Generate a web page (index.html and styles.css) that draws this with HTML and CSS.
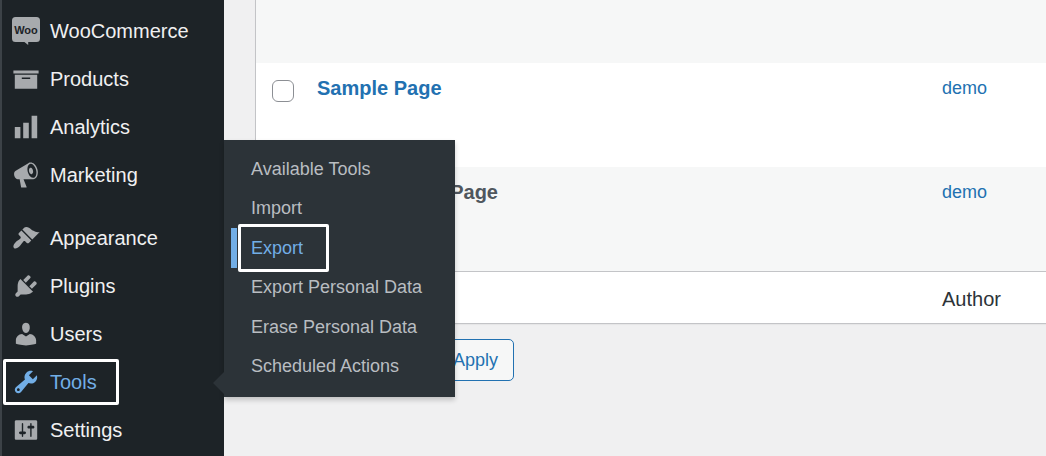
FILE: index.html
```html
<!DOCTYPE html>
<html lang="en">
<head>
    <meta charset="UTF-8">
    <meta name="viewport" content="width=device-width, initial-scale=1.0">
    <title>Pages</title>
    <link rel="stylesheet" href="styles.css">
</head>
<body>

    <div class="admin-wrap">
        <nav class="admin-menu">
            <ul class="menu-list">
                <li class="menu-item">
                    <a href="#">
                        <svg viewBox="0 0 28 28"><path d="M3.500 0h21a3.500 3.500 0 0 1 3.500 3.500v18a3.500 3.500 0 0 1-3.500 3.500h-8.300v3l-3.800-3H3.500a3.500 3.500 0 0 1-3.500-3.500v-18a3.500 3.500 0 0 1 3.500-3.500z"></path><text x="14" y="17" class="woo-text">Woo</text></svg>
                        <span>WooCommerce</span>
                    </a>
                </li>
                <li class="menu-item">
                    <a href="#">
                        <svg viewBox="0 0 20 20"><path d="M19 4v2H1V4h18zM2 7h16v10H2V7zm11 3V9H7v1h6z"></path></svg>
                        <span>Products</span>
                    </a>
                </li>
                <li class="menu-item">
                    <a href="#">
                        <svg viewBox="0 0 20 20"><path d="M18 18V2h-4v16h4zm-6 0V7H8v11h4zm-6 0v-8H2v8h4z"></path></svg>
                        <span>Analytics</span>
                    </a>
                </li>
                <li class="menu-item">
                    <a href="#">
                        <svg viewBox="0 0 20 20"><path d="M18.15 5.94c.46 1.62.38 3.22-.02 4.48-.42 1.28-1.26 2.18-2.3 2.48-.16.06-.26.06-.4.06-.06.02-.12.02-.18.02-.06.02-.14.02-.22.02h-6.8l2.22 5.5c.02.14-.06.26-.14.34-.08.1-.24.16-.34.16H6.95c-.1 0-.26-.06-.34-.16-.08-.08-.16-.2-.14-.34l-1-5.5H4.25l-.02-.02c-.5.06-1.08-.18-1.54-.62s-.88-1.08-1.06-1.88c-.24-.8-.2-1.56-.02-2.2.18-.62.58-1.08 1.06-1.3l.02-.02 9-5.4c.1-.06.18-.1.24-.16.06-.04.14-.08.24-.12.16-.08.28-.12.5-.18 1.04-.3 2.24.1 3.22.98s1.84 2.24 2.26 3.86zm-2.58 5.98h-.02c.4-.1.74-.34 1.04-.7.58-.7.86-1.76.86-3.04 0-.64-.1-1.3-.28-1.98-.34-1.36-1.02-2.5-1.78-3.24s-1.68-1.1-2.46-.88c-.82.22-1.4.96-1.7 2-.32 1.04-.28 2.36.06 3.72.38 1.36 1 2.5 1.8 3.24.78.74 1.62 1.1 2.48.88zm-2.54-7.08c.22-.04.42-.02.62.04.38.16.76.48 1.02 1s.42 1.2.42 1.78c0 .3-.04.56-.12.8-.18.48-.44.84-.86.94-.34.1-.8-.06-1.14-.4s-.64-.86-.78-1.5c-.18-.62-.12-1.24.02-1.72s.48-.84.82-.94z"></path></svg>
                        <span>Marketing</span>
                    </a>
                </li>
                <li class="menu-item separated">
                    <a href="#">
                        <svg viewBox="0 0 20 20"><path d="M14.48 11.06L7.41 3.99l1.5-1.5c.5-.56 2.3-.47 3.51.32 1.21.8 1.43 1.28 2.91 2.1 1.18.64 2.45 1.26 4.45.85zm-.71.71L6.7 4.7 4.93 6.47c-.39.39-.39 1.02 0 1.41l1.06 1.06c.39.39.39 1.03 0 1.42-.6.6-1.43 1.11-2.21 1.69-.35.26-.7.53-1.01.84C1.43 14.23.4 16.08 1.4 17.07c.99 1 2.84-.03 4.18-1.36.31-.31.58-.66.85-1.02.57-.78 1.08-1.61 1.69-2.21.39-.39 1.02-.39 1.41 0l1.06 1.06c.39.39 1.02.39 1.41 0z"></path></svg>
                        <span>Appearance</span>
                    </a>
                </li>
                <li class="menu-item">
                    <a href="#">
                        <svg viewBox="0 0 20 20"><path d="M13.11 4.36L9.87 7.6 8 5.73l3.24-3.24c.35-.34 1.05-.2 1.56.32.52.51.66 1.21.31 1.55zm-8 1.77l.91-1.12 9.01 9.01-1.19.84c-.71.71-2.63 1.16-3.82 1.16H6.14L4.9 17.26c-.59.59-1.54.59-2.12 0-.59-.58-.59-1.53 0-2.12l1.24-1.24v-3.88c0-1.13.4-3.19 1.09-3.89zm7.26 3.97l3.24-3.24c.34-.35 1.04-.21 1.55.31.52.51.66 1.21.31 1.55l-3.24 3.25z"></path></svg>
                        <span>Plugins</span>
                    </a>
                </li>
                <li class="menu-item">
                    <a href="#">
                        <svg viewBox="0 0 20 20"><path d="M10 9.25c-2.27 0-2.73-3.44-2.73-3.44C7 4.02 7.82 2 9.97 2c2.16 0 2.98 2.02 2.71 3.81 0 0-.41 3.44-2.68 3.44zm0 2.57L12.72 10c2.39 0 4.52 2.33 4.52 4.53v2.49s-3.65 1.13-7.24 1.13c-3.65 0-7.24-1.13-7.24-1.13v-2.49c0-2.25 1.94-4.48 4.47-4.48z"></path></svg>
                        <span>Users</span>
                    </a>
                </li>
                <li class="menu-item current">
                    <a href="#">
                        <svg viewBox="0 0 20 20"><path d="M16.68 9.77c-1.34 1.34-3.3 1.67-4.95.99l-5.41 6.52c-.99.99-2.59.99-3.58 0s-.99-2.59 0-3.57l6.52-5.42c-.68-1.65-.35-3.61.99-4.95 1.28-1.28 3.12-1.62 4.72-1.06l-2.89 2.89 2.82 2.82 2.86-2.87c.53 1.58.18 3.39-1.08 4.65zM3.81 16.21c.4.39 1.04.39 1.43 0 .4-.4.4-1.04 0-1.43-.39-.4-1.03-.4-1.43 0-.39.39-.39 1.03 0 1.43z"></path></svg>
                        <span>Tools</span>
                    </a>
                    <ul class="submenu">
                        <li><a href="#">Available Tools</a></li>
                        <li><a href="#">Import</a></li>
                        <li class="active"><a href="#">Export</a></li>
                        <li><a href="#">Export Personal Data</a></li>
                        <li><a href="#">Erase Personal Data</a></li>
                        <li><a href="#">Scheduled Actions</a></li>
                    </ul>
                </li>
                <li class="menu-item">
                    <a href="#">
                        <svg viewBox="0 0 20 20"><path d="M18 16V4c0-.55-.45-1-1-1H3c-.55 0-1 .45-1 1v12c0 .55.45 1 1 1h14c.55 0 1-.45 1-1zM8 11h1c.55 0 1 .45 1 1s-.45 1-1 1H8v1.5c0 .28-.22.5-.5.5s-.5-.22-.5-.5V13H6c-.55 0-1-.45-1-1s.45-1 1-1h1V5.500c0-.28.22-.5.5-.5s.5.22.5.5V11zm5-2h-1c-.55 0-1-.45-1-1s.45-1 1-1h1V5.500c0-.28.22-.5.5-.5s.5.22.5.5V7h1c.55 0 1 .45 1 1s-.45 1-1 1h-1v5.500c0 .28-.22.5-.5.5s-.5-.22-.5-.5V9z"></path></svg>
                        <span>Settings</span>
                    </a>
                </li>
            </ul>
        </nav>

        <main class="content">
            <table class="list-table">
                <colgroup>
                    <col class="col-check">
                    <col>
                    <col class="col-author">
                </colgroup>
                <tbody>
                    <tr class="row-cut">
                        <td></td>
                        <td></td>
                        <td></td>
                    </tr>
                    <tr>
                        <td class="check"><input type="checkbox" aria-label="Select Sample Page"></td>
                        <td><a class="row-title" href="#">Sample Page</a></td>
                        <td><a href="#">demo</a></td>
                    </tr>
                    <tr>
                        <td class="check"><input type="checkbox" aria-label="Select page"></td>
                        <td><strong class="row-title tucked">Page</strong></td>
                        <td><a href="#">demo</a></td>
                    </tr>
                </tbody>
                <tfoot>
                    <tr>
                        <td class="check"><input type="checkbox" aria-label="Select all"></td>
                        <td></td>
                        <th scope="col">Author</th>
                    </tr>
                </tfoot>
            </table>
            <div class="table-nav">
                <button type="button" class="button">Apply</button>
            </div>
        </main>
    </div>

</body>
</html>
```
FILE: styles.css
```css
:root {
    --menu-bg: #1d2327;
    --submenu-bg: #2c3338;
    --menu-text: #f0f0f1;
    --icon-color: #a7aaad;
    --highlight: #72aee6;
    --link: #2271b1;
    --border: #c3c4c7;
    --body-bg: #f0f0f1;
}

*,
*::before,
*::after {
    margin: 0;
    padding: 0;
    box-sizing: border-box;
}

body {
    font-family: "Helvetica Neue", "Liberation Sans", Arial, sans-serif;
    font-size: 18px;
    line-height: 26px;
    color: #2c3338;
    background-color: var(--body-bg);
    overflow: hidden;
}

a {
    color: var(--link);
    text-decoration: none;
}

ul {
    list-style: none;
}

.admin-wrap {
    display: flex;
    min-height: 100vh;
}

/* Left menu */
.admin-menu {
    flex: 0 0 224px;
    padding-top: 7px;
    background-color: var(--menu-bg);
    border-left: 2px solid #3c4247;
}

.menu-item {
    position: relative;
}

.menu-item.separated {
    margin-top: 15px;
}

.menu-item > a {
    display: flex;
    align-items: center;
    gap: 10px;
    height: 48px;
    padding-left: 10px;
    font-size: 20px;
    color: var(--menu-text);
}

.menu-item svg {
    width: 28px;
    height: 28px;
    fill: var(--icon-color);
}

.menu-item svg .woo-text {
    font-family: "Liberation Sans Narrow", "Liberation Sans", sans-serif;
    font-size: 11px;
    font-weight: bold;
    text-anchor: middle;
    fill: var(--menu-bg);
}

.menu-item.current > a {
    color: var(--highlight);
}

.menu-item.current > a svg {
    fill: var(--highlight);
}

/* White frames round the chosen entries */
.menu-item.current > a::after,
.submenu .active a::after {
    content: "";
    position: absolute;
    border: 3px solid #fff;
    border-radius: 2px;
}

.menu-item.current > a::after {
    top: 1px;
    left: 1px;
    width: 116px;
    height: 46px;
}

/* Fly-out menu */
.submenu {
    position: absolute;
    left: 100%;
    bottom: 9px;
    z-index: 10;
    display: grid;
    grid-auto-rows: 1fr;
    width: 231px;
    height: 257px;
    padding: 9px 0 11px;
    background-color: var(--submenu-bg);
    box-shadow: 0 3px 5px rgba(0, 0, 0, 0.2);
}

.submenu::before {
    content: "";
    position: absolute;
    right: 100%;
    bottom: 3px;
    border: 11px solid transparent;
    border-right-color: var(--submenu-bg);
    border-left-width: 0;
}

.submenu li {
    position: relative;
    display: grid;
}

.submenu a {
    display: flex;
    align-items: center;
    padding-left: 27px;
    color: #b9bdc1;
}

.submenu .active a {
    color: var(--highlight);
}

.submenu .active::before {
    content: "";
    position: absolute;
    top: 0;
    bottom: 0;
    left: 7px;
    width: 6px;
    background-color: var(--highlight);
}

.submenu .active a::after {
    top: -4px;
    bottom: -4px;
    left: 14px;
    width: 91px;
}

/* Page list */
.content {
    flex: 1;
    min-width: 0;
    padding-left: 31px;
}

.list-table {
    width: 100%;
    table-layout: fixed;
    border-collapse: separate;
    border-spacing: 0;
    background-color: #fff;
    border-left: 1px solid var(--border);
    border-bottom: 1px solid var(--border);
    box-shadow: 0 1px 1px rgba(0, 0, 0, 0.04);
}

.col-check {
    width: 61px;
}

.col-author {
    width: 104px;
}

.list-table td,
.list-table th {
    padding-top: 12px;
    vertical-align: top;
    text-align: left;
}

.list-table tbody tr {
    height: 104px;
}

.list-table tbody .row-cut {
    height: 63px;
}

.list-table tbody tr:nth-child(odd) {
    background-color: #f6f7f7;
}

.list-table tfoot td,
.list-table tfoot th {
    height: 52px;
    border-top: 1px solid var(--border);
    font-size: 20px;
    font-weight: normal;
    vertical-align: middle;
}

.list-table .check {
    padding-top: 17px;
    padding-left: 16px;
}

.list-table tfoot th {
    padding-top: 2px;
}

.check input {
    display: block;
    width: 22px;
    height: 22px;
    appearance: none;
    background-color: #fff;
    border: 1px solid #8c8f94;
    border-radius: 6px;
}

.row-title {
    font-size: 20px;
    font-weight: bold;
}

.row-title.tucked {
    display: block;
    width: 181px;
    color: #50575e;
    text-align: right;
}

.table-nav {
    display: flex;
    padding: 15px 0 0 182px;
}

.button {
    height: 42px;
    padding: 0 15px;
    font-family: inherit;
    font-size: 18px;
    color: var(--link);
    background-color: #f6f7f7;
    border: 1px solid var(--link);
    border-radius: 5px;
}
```
